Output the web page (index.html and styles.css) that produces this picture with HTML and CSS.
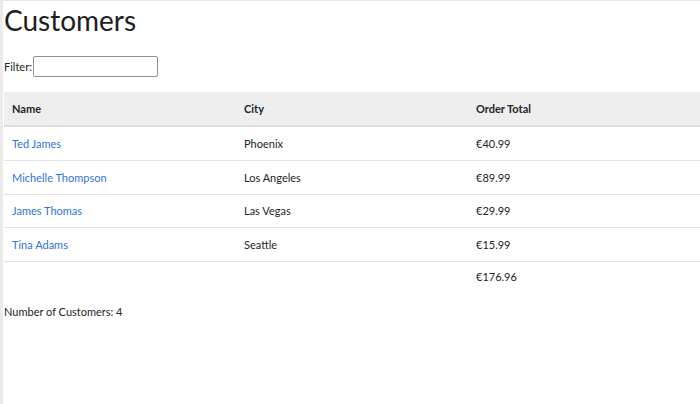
FILE: index.html
```html
<!DOCTYPE html>
<html>
<head>
<meta charset="utf-8">
<link rel="stylesheet" href="styles.css">
</head>
<body>
<div class="frame">
  <h1 class="title">Customers</h1>
  <div class="filter">
    <label class="filter-label">Filter:</label>
    <input class="filter-input" type="text">
  </div>
  <table class="grid">
    <thead>
      <tr><th>Name</th><th>City</th><th>Order Total</th></tr>
    </thead>
    <tbody>
      <tr><td><a href="#">Ted James</a></td><td>Phoenix</td><td>€40.99</td></tr>
      <tr><td><a href="#">Michelle Thompson</a></td><td>Los Angeles</td><td>€89.99</td></tr>
      <tr><td><a href="#">James Thomas</a></td><td>Las Vegas</td><td>€29.99</td></tr>
      <tr><td><a href="#">Tina Adams</a></td><td>Seattle</td><td>€15.99</td></tr>
      <tr class="total"><td></td><td></td><td>€176.96</td></tr>
    </tbody>
  </table>
  <div class="count">Number of Customers: 4</div>
</div>
</body>
</html>
```

FILE: styles.css
```css
html, body {
  margin: 0;
  padding: 0;
  background: #fff;
}
body {
  font-family: "Lato", "Noto Sans", sans-serif;
  color: #212529;
  font-size: 11px;
}
.frame {
  box-sizing: border-box;
  height: 404px;
  border-top: 1px solid #e6e6e6;
  border-left: 3px solid #ebebeb;
  padding-left: 1px;
}
.title {
  margin: 0;
  padding-top: 2px;
  font-size: 28px;
  font-weight: 400;
  line-height: 34px;
  color: #1b1e22;
}
.filter {
  display: flex;
  align-items: center;
  margin-top: 19px;
  gap: 1px;
}
.filter-label {
  font-size: 11px;
}
.filter-input {
  box-sizing: border-box;
  width: 125px;
  height: 21px;
  border: 1px solid #8f8f8f;
  border-radius: 2px;
  margin: 0;
}
.grid {
  width: 100%;
  margin-top: 15px;
  border-collapse: collapse;
  table-layout: fixed;
}
.grid th {
  text-align: left;
  background: #eeeeee;
  font-weight: 700;
  height: 33px;
  padding: 0 8px;
  border-bottom: 2px solid #dcdcdc;
}
.grid td {
  height: 32.75px;
  padding: 0 8px;
  border-top: 1px solid #e4e4e4;
}
.grid tbody tr:first-child td {
  border-top: none;
}
.grid tr.total td {
  vertical-align: top;
  padding-top: 8px;
}
.grid a {
  color: #2e74d6;
  text-decoration: none;
}
.count {
  margin-top: 2px;
}
```
